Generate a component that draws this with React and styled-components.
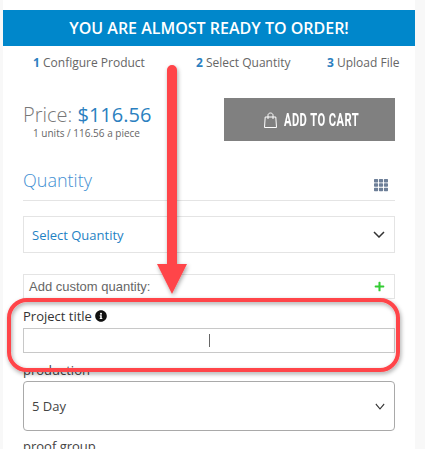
import React from 'react';
import styled, { createGlobalStyle } from 'styled-components';
import { FaTh, FaPlus, FaInfoCircle } from 'react-icons/fa';

const Global = createGlobalStyle`
  html, body { margin: 0; padding: 0; background: #fff; }
  body { width: 425px; height: 449px; overflow: hidden; font-family: "Open Sans", sans-serif; }
`;
const Page = styled.div`
  position: relative; width: 425px; height: 449px; overflow: hidden;
  padding: 10px 10px 0 3px; box-sizing: border-box;
  background: linear-gradient(to right, #f8f8f8 0, #f8f8f8 3px, transparent 3px, transparent 415px, #f8f8f8 415px);
`;
const Panel = styled.main`background: #fff; width: 412px; height: 439px; overflow: hidden;`;
const Banner = styled.h1`
  margin: 0; height: 36px; background: #0087cb; color: #fff; text-align: center;
  font: 600 16px/36px "Open Sans", sans-serif;
`;
const Steps = styled.ol`
  list-style: none; margin: 0; padding: 0 0 0 30px; height: 32px;
  display: grid; grid-template-columns: 163px 131px auto; align-items: center;
  font-size: 12px; color: #666;
`;
const Step = styled.li`white-space: nowrap;`;
const StepNo = styled.b`color: #2c7fc0; font-weight: 700;`;
const Content = styled.div`padding: 20px 20px 0 20px;`;
const TopRow = styled.div`display: flex; justify-content: space-between; height: 43px;`;
const PriceBox = styled.div`width: 127px; text-align: center; padding-top: 5px;`;
const Price = styled.div`font-size: 20px; font-weight: 300; line-height: 24px; color: #777; white-space: nowrap;`;
const Amount = styled.span`color: #2b7fc0; font-weight: 400;`;
const PriceNote = styled.div`font-size: 10px; line-height: 12px; color: #666; white-space: nowrap;`;
const CartButton = styled.button`
  width: 171px; height: 43px; border: 0; background: #808080; color: #fff; padding: 0 0 0 40px;
  display: flex; align-items: center; justify-content: flex-start;
`;
const CartText = styled.span`
  display: inline-block; font: 700 18px/1 Roboto, sans-serif; letter-spacing: .7px;
  transform: scaleX(.62); transform-origin: left center; width: 75px; margin-left: 7px; white-space: nowrap; text-align: left;
`;
const SectionHead = styled.div`
  margin-top: 23px; height: 31px; padding: 0 7px 5px 0; border-bottom: 1px solid #e4e4e4;
  display: flex; justify-content: space-between; align-items: center;
`;
const SectionTitle = styled.h2`margin: 0; font-size: 18px; font-weight: 300; color: #3f8fd2; line-height: 24px;`;
const GridIcon = styled(FaTh)`color: #6d7f98; width: 14px; height: 14px; margin-top: 11px;`;
const QtySelect = styled.div`
  margin-top: 15px; height: 37px; box-sizing: border-box; border: 1px solid #e4e4e4; display: flex; align-items: center;
  justify-content: space-between; padding: 0 9px 0 8px; font-size: 13px; color: #1f82c4;
`;
const CustomRow = styled.div`
  margin-top: 21px; height: 25px; box-sizing: border-box; border: 1px solid #e4e4e4; display: flex; align-items: center;
  justify-content: space-between; padding: 0 9px 0 5px; font: 13px "Liberation Sans", sans-serif; color: #666;
`;
const GreenPlus = styled(FaPlus)`color: #33cc33; width: 11px; height: 11px;`;
const Label = styled.label`
  display: flex; align-items: center; gap: 3px; font-size: 13px; line-height: 16px; color: #333;
`;
const ProjectLabel = styled(Label)`margin-top: 9px;`;
const TitleInput = styled.div`
  margin-top: 4px; height: 25px; box-sizing: border-box; border: 1px solid #c8c8c8; position: relative;
`;
const Caret = styled.span`position: absolute; left: 185px; top: 5px; width: 1px; height: 13px; background: #666;`;
const ProdLabel = styled(Label)`margin-top: 9px; color: #444;`;
const ProductionSelect = styled.div`
  margin-top: 3px; height: 50px; box-sizing: border-box; border: 1px solid #a9a9a9; border-radius: 4px; display: flex; align-items: center;
  justify-content: space-between; padding: 0 9px 0 8px; font-size: 13px; color: #444;
`;
const ProofLabel = styled(Label)`margin-top: 7px; color: #444;`;
const Overlay = styled.svg`position: absolute; left: 0; top: 0; pointer-events: none;`;

const Chevron = ({ w = 1.5, size = 12 }) => (
  <svg width={size} height="7" viewBox="0 0 12 7" preserveAspectRatio="none" fill="none" stroke="#333" strokeWidth={w}><path d="M1 1 L6 6 L11 1" /></svg>
);
const Bag = () => (
  <svg width="13" height="16" viewBox="0 0 13 16" fill="none" stroke="#fff" strokeWidth="1">
    <path d="M1.2 5 H11.8 L12.5 15.5 H.5 Z" /><path d="M4 7 V3.2 C4 .3 9 .3 9 3.2 V7" />
  </svg>
);

export default function App() {
  return (
    <Page>
      <Global />
      <Panel>
        <Banner>YOU ARE ALMOST READY TO ORDER!</Banner>
        <Steps>
          <Step><StepNo>1</StepNo> Configure Product</Step>
          <Step><StepNo>2</StepNo> Select Quantity</Step>
          <Step><StepNo>3</StepNo> Upload File</Step>
        </Steps>
        <Content>
          <TopRow>
            <PriceBox>
              <Price>Price: <Amount>$116.56</Amount></Price>
              <PriceNote>1 units / 116.56 a piece</PriceNote>
            </PriceBox>
            <CartButton><Bag /><CartText>ADD TO CART</CartText></CartButton>
          </TopRow>
          <SectionHead>
            <SectionTitle>Quantity</SectionTitle>
            <GridIcon />
          </SectionHead>
          <QtySelect>Select Quantity <Chevron /></QtySelect>
          <CustomRow>Add custom quantity: <GreenPlus /></CustomRow>
          <ProjectLabel>Project title <FaInfoCircle size={12} color="#111" /></ProjectLabel>
          <TitleInput><Caret /></TitleInput>
          <ProdLabel>production</ProdLabel>
          <ProductionSelect>5 Day <Chevron w={1.2} size={10} /></ProductionSelect>
          <ProofLabel>proof group</ProofLabel>
        </Content>
      </Panel>
      <Overlay width="425" height="449" viewBox="0 0 425 449">
        <defs>
          <filter id="s" x="-20%" y="-20%" width="140%" height="140%">
            <feDropShadow dx="1" dy="2" stdDeviation="2" floodColor="#000" floodOpacity=".35" />
          </filter>
        </defs>
        <g filter="url(#s)">
          <rect x="9" y="300" width="389" height="70" rx="18" fill="none" stroke="#ff444a" strokeWidth="4" />
          <path d="M167 70 a5 5 0 0 1 10 0 V264 H187 L172 294 L157 264 H167 Z" fill="#ff444a" />
        </g>
      </Overlay>
    </Page>
  );
}
